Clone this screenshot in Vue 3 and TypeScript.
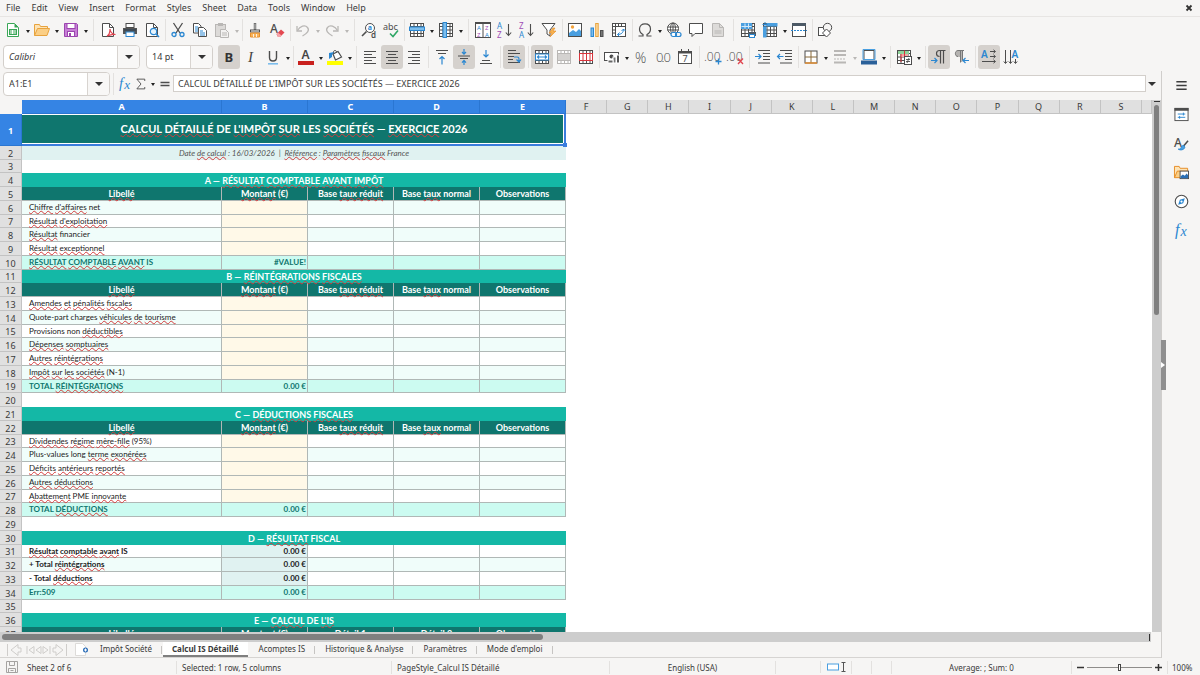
<script setup lang="ts">
import { ref } from 'vue'

type Tool = { icon: string; label: string; drop?: boolean; on?: boolean; off?: boolean; sep?: number }
type Segment = { text: string; flagged: boolean }
type Row = {
  n: number
  kind: 'title' | 'info' | 'blank' | 'section' | 'head' | 'line' | 'total' | 'result'
  text?: string
  amount?: string
  heads?: string[]
}

const menus = ['File', 'Edit', 'View', 'Insert', 'Format', 'Styles', 'Sheet', 'Data', 'Tools', 'Window', 'Help']

const K = '#4d4d4d'
const B = '#2b87d1'
const G = '#b9b7b5'
const line = (d: string, c = K, w = 1) => `<path d="${d}" fill="none" stroke="${c}" stroke-width="${w}"/>`
const box = (x: number, y: number, w: number, h: number, f: string, s = 'none') =>
  `<rect x="${x}" y="${y}" width="${w}" height="${h}" fill="${f}" stroke="${s}"/>`
const glyph = (x: number, y: number, size: number, t: string, c = K, extra = '') =>
  `<text x="${x}" y="${y}" font-size="${size}" fill="${c}" ${extra}>${t}</text>`
const page = (c = K, f = '#fff') => `<path d="M2.5 1.5h7l4 4v9h-11z" fill="${f}" stroke="${c}"/><path d="M9.5 1.5v4h4" fill="none" stroke="${c}"/>`
const grid = (c = K) => box(1.5, 1.5, 13, 13, '#fff', c) + line('M1.5 4.5h13M1.5 8h13M1.5 11.5h13M5 1.5v13M8.5 1.5v13M12 1.5v13', c)
const light = 'font-weight="300" font-family="Open Sans, Noto Sans, sans-serif"'
const serifItalic = 'font-style="italic" font-family="Liberation Serif, serif"'

const icons: Record<string, string> = {
  create: `<path d="M2.5 1.5h7l4 4v9h-11z" fill="#fff" stroke="#3aa757"/><path d="M9.5 1.5v4h4z" fill="#3aa757"/>` + box(4, 7, 8, 6, '#3aa757') + line('M5 9h6M5 11h6M7.5 8v4', '#fff'),
  open: `<path d="M.5 13.5V2.5h5l1 2h7v3" fill="#fde3b5" stroke="#e8a33d"/><path d="M.5 13.5l3-7h12l-2.500 7z" fill="#fbcf86" stroke="#e8a33d"/>`,
  save: `<path d="M1.5 1.5h12l1 1v12h-13z" fill="#c77fd6" stroke="#9b45ae"/>` + box(4, 1.5, 8, 5, '#fff', '#9b45ae') + box(4.5, 9.5, 7, 5, '#fff', '#9b45ae') + box(6, 11, 2, 3, '#9b45ae'),
  pdf: page() + `<path d="M7 14c2-1 3-4 3-7 0 3 2.500 5.500 5.500 5.500-3-.5-6 .5-8.500 1.500z" fill="#fff" stroke="#e0444f" stroke-width="1.200"/>`,
  print: box(4, 1.5, 8, 4, '#fff', K) + `<path d="M1 6h14v6H1z" fill="#555"/>` + box(4, 10, 8, 4.5, '#fff', B) + box(2, 7, 12, 2, '#3f4a54'),
  preview: page() + `<circle cx="9.5" cy="9.5" r="3.200" fill="#e5f3fd" stroke="${B}" stroke-width="1.200"/>` + line('M12 12l3 3', B, 1.6),
  cut: line('M3.5 1l6.500 10M12.5 1L6 11', K, 1.3) + `<circle cx="4" cy="12.5" r="2" fill="none" stroke="${B}" stroke-width="1.300"/><circle cx="12" cy="12.5" r="2" fill="none" stroke="${B}" stroke-width="1.300"/>`,
  copy: `<path d="M1.5 1.5h5l2.500 2.500v7h-7.500z" fill="#fff" stroke="${K}"/>` + line('M3 5h3M3 7h3M3 9h3', B) + `<path d="M6.5 5.5h5l3 3v6h-8z" fill="#fff" stroke="${K}"/>` + line('M8 9h3M8 11h5M8 13h5', B),
  paste: box(1.5, 2.5, 10, 12, '#dcdad8', G) + box(4, 1, 5, 3, G) + `<path d="M6.5 7.5h5l3 3v5h-8z" fill="#f3f2f1" stroke="${G}"/>` + line('M8 11h5M8 13h5', G),
  brush: line('M8 1v7', K, 2.4) + line('M8 1.5v6', '#fff', 0.8) + box(3.5, 8, 9, 2, '#fff', K) + `<path d="M3.5 11h9v4h-9z" fill="#f9b45c" stroke="#e8902d"/>` + line('M6.5 12v3M9.5 12v3', '#fff', 0.8),
  clear: glyph(1, 11, 12, 'A', K, 'font-weight="500"') + `<path d="M7.500 12l4.500-4.500 3.500 3-4.500 4.500H9z" fill="#e34850"/><path d="M7.500 12l1.500-1.500 3.500 3L11 15H9z" fill="#f5a3a7"/>`,
  undo: line('M2 4v5h5', G, 1.3) + line('M2.5 8.5C5 4 10 2.5 12.5 5.5s-.5 6-5 8.500', G, 1.3),
  redo: line('M14 4v5H9', G, 1.3) + line('M13.5 8.5C11 4 6 2.5 3.5 5.5s.5 6 5 8.500', G, 1.3),
  find: `<circle cx="9" cy="6" r="4.500" fill="#fff" stroke="${K}"/>` + line('M5.5 9.5L1 14', K, 1.6) + glyph(6.8, 8.2, 7, 'a', B, 'font-weight="700"') + glyph(10, 15.500, 8, 'd', K, 'font-weight="600"'),
  spell: glyph(0, 7.5, 9, 'abc', K) + line('M7 11.5l3 3 5-6', '#2fa766', 1.6),
  row: grid() + box(0.5, 5, 15, 3.5, '#7cbdec', B),
  col: grid() + box(5, 0.5, 3.5, 15, '#7cbdec', B),
  sort: box(.5, .5, 15, 15, '#fff', K) + box(0, 0, 16, 2, K) + line('M8 2v13', K) + glyph(2, 8.2, 6, 'A', B) + glyph(2, 15, 6, 'Z', '#a04db5') + glyph(10, 8.2, 6, 'Z', '#a04db5') + glyph(10, 15, 6, 'A', B),
  az: glyph(0, 7, 8, 'A', B) + glyph(0, 15.500, 8, 'Z', '#a04db5') + line('M11.5 2v11M8.800 10.5l2.700 3 2.700-3', K, 1.1),
  za: glyph(0, 7, 8, 'Z', '#a04db5') + glyph(0, 15.500, 8, 'A', B) + line('M11.5 2v11M8.800 10.5l2.700 3 2.700-3', K, 1.1),
  filter: `<path d="M1 1.5h13L9 8v6l-3-2V8z" fill="#fff" stroke="${K}"/><path d="M12 6l-4 5h3l-2 4 6-6h-3l2-3z" fill="#f7b14f" stroke="#e58b22" stroke-width=".6"/>`,
  image: box(1.5, 1.5, 13, 13, '#fff', K) + `<path d="M2 14v-3l4-3 3 2 3-3 2 2v5z" fill="#4a9fe0"/><circle cx="5.5" cy="5" r="1.700" fill="#f3a33c"/>`,
  chart: box(2, 6, 2.5, 8.5, '#7cbdec', B) + box(6.7, 1.5, 2.5, 13, '#fcd9a0', '#e8a33d') + box(11.5, 8.5, 2.5, 6, '#777', K),
  pivot: box(1.5, 1.5, 13, 13, '#fff', K) + line('M1.5 4.5h13M4.5 1.5v13M7.5 1.5v3M10.5 1.5v3M1.5 8h3M1.5 11h3') + line('M6.5 12.5c4 0 6-2 6-5.500M6.5 12.5l2-2M6.5 12.5l2 2M12.5 7l-2 2M12.5 7l2 2', B),
  omega: line('M1.5 14h4.500v-1.500C3 11 2.5 8.5 2.5 7 2.5 3.5 5 1.8 8 1.8S13.5 3.5 13.5 7c0 1.500-.5 4-3.500 5.500V14h4.500', K, 1.2),
  link: `<circle cx="7" cy="6.5" r="5.500" fill="#fff" stroke="${K}"/><ellipse cx="7" cy="6.5" rx="2.500" ry="5.500" fill="none" stroke="${K}"/>` + line('M1.5 5h11M1.5 8h11M7 1v11') + `<rect x="5" y="10.5" width="5.500" height="4" rx="2" fill="#fff" stroke="${B}" stroke-width="1.200"/><rect x="9.5" y="10.5" width="5.500" height="4" rx="2" fill="none" stroke="${B}" stroke-width="1.200"/>`,
  comment: `<path d="M1.5 1.5h13v10H7l-3 3v-3H1.5z" fill="#fff" stroke="${K}"/>`,
  header: page(G, '#dddbd9') + line('M4.5 11h7M4.5 9h7', G),
  area: grid() + box(1, 1, 11, 6, '#4a9fe0') + line('M1.5 4.5h10M5 1.5v5M8.5 1.5v5', '#d4e9f9') + box(8, 10, 8, 4, '#4d5a66') + box(9.5, 12.5, 5, 3, '#fff', B),
  freeze: grid() + box(4.5, 1, 11, 3.5, '#4a9fe0') + box(1, 4.5, 3.5, 11, '#4a9fe0') + line('M3 0v5M.5 2.5h5', B),
  split: box(1.5, 1.5, 13, 13, '#fff', K) + box(1, 1, 14, 3, '#4d5a66') + `<path d="M0 8.5h16" stroke="${B}" stroke-dasharray="2 1"/>`,
  shapes: box(1.5, 5.5, 8, 8, '#fff', K) + `<circle cx="10.5" cy="5.5" r="4.200" fill="#f6f5f4" stroke="${K}"/><path d="M9.5 7l4 4-4 4-4-4z" fill="#fff" stroke="${K}"/>`,
  bold: glyph(3.5, 13, 13, 'B', '#333', 'font-weight="700"'),
  italic: glyph(5, 13, 15, 'I', '#444', serifItalic),
  under: line('M4.5 2v6.500c0 2 1 3.500 3.500 3.500s3.500-1.500 3.500-3.500V2', K, 1.4) + box(3, 14, 10, 1.6, '#7cbdec'),
  color: glyph(3.5, 10, 12, 'A', '#444', 'font-weight="600"') + box(0, 12, 16, 4, '#c9211e'),
  fill: line('M6.500 6V3c0-2 3-2 3 0v2', K) + `<path d="M6 5l5-2.500L14.500 8 8.500 11z" fill="#fff" stroke="${K}" stroke-width="1.200"/>` + `<path d="M2 10V4l5-1-2 3v2z" fill="${B}"/>` + box(0, 12, 16, 4, '#ffff00'),
  left: line('M2 2.5h12M2 5.5h8M2 8.5h12M2 11.5h8M2 14.5h12'),
  center: line('M2 2.5h12M4 5.5h8M2 8.5h12M4 11.5h8M2 14.5h12'),
  right: line('M2 2.5h12M6 5.5h8M2 8.5h12M6 11.5h8M2 14.5h12'),
  top: line('M2 1.5h12M4 4.5h8') + line('M8 15.5V8M5.5 10L8 7.5l2.500 2.500', B, 1.2),
  middle: line('M2 7h12M4 9.5h8') + line('M8 0v5M6 3l2 2.200L10 3M8 16v-4.500M6 13.7l2-2.200 2 2.200', B, 1.2),
  bottom: line('M4 11.5h8M2 14.5h12') + line('M8 1v7M5.5 5.5L8 8l2.500-2.500', B, 1.2),
  wrap: line('M2 1.5h8M2 4.5h12M2 7.5h6M2 10.5h5M2 13.5h12') + line('M8 8h3c2 0 2 1 2 4M10.5 10.5l2.500 2.500 2-2.500', B, 1.2),
  merge: grid() + box(1.5, 5, 13, 6, '#fff', B) + line('M3 8h10M5 6.5L3.5 8 5 9.5M11 6.5L12.5 8 11 9.5', B, 1.2),
  mergeC: grid(G) + box(2, 5, 12, 6, '#d4d2d0'),
  unmerge: grid() + box(1.5, 4.5, 13, 7, '#fff', '#d8343c') + line('M5 4.5v7M8.5 4.5v7M12 4.5v7', '#d8343c'),
  money: box(.5, 3.5, 14, 8, '#fff', K) + `<circle cx="7.5" cy="7.5" r="2" fill="${K}"/>` + box(9, 8, 3, 6, '#777', '#fff') + box(12.5, 6, 3, 8, '#555', '#fff') + box(4, 11, 5, 3, '#666', '#fff'),
  percent: glyph(2, 13.5, 14, '%', K, light),
  decimal: glyph(1, 13, 13, '00', K, light) + box(7.5, 12, 1, 1, K),
  date: box(1.5, 2.5, 13, 12, '#fff', K) + box(1, 2, 14, 2.5, K) + line('M4.5 0v3M11.5 0v3', K) + glyph(5.500, 13, 9, '7', K),
  decAdd: glyph(-1, 12, 12, '.00', K, light) + line('M13.5 9.5v6M10.5 12.5h6', B, 1.3),
  decDel: glyph(-1, 12, 12, '.00', K, light) + line('M11 9.5l5 5.500M16 9.5l-5 5.500', '#e0444f', 1.3),
  indent: line('M3 1.5h12M8 4.5h7M8 7.5h7M8 10.5h7M3 14h12') + line('M0 7.5h6M3.5 5L6 7.5 3.5 10', B, 1.2),
  outdent: line('M3 1.5h12M8 4.5h7M8 7.5h7M8 10.5h7M3 14h12') + line('M.5 7.5h6M3 5L.5 7.5 3 10', B, 1.2),
  borders: box(2, 2, 12, 12, '#fff', K) + line('M8 2v12M2 8h12', '#8a6a3a') + line('M2 14h12', '#e8902d', 1.4),
  lines: line('M2 2h12', G, 2) + line('M2 6h12', G, 2) + `<path d="M2 10h12" stroke="${G}" stroke-dasharray="2 1"/><path d="M2 13.5h12" stroke="${G}" stroke-width="2"/>`,
  bcolor: box(3, 1.5, 10, 9, '#fff', K) + `<path d="M2 .5h12v10H2z" fill="none" stroke="#4a9fe0"/>` + box(0, 11.5, 16, 4, '#2a6099'),
  cond: grid() + box(2, 2, 11, 3, '#8ed49a') + box(5, 5, 7, 3, '#f4a7a7') + line('M5 5v8M8.5 1.5v8', '#d8343c') + box(8.5, 7.5, 7, 8, '#fff', K) + line('M10 10.5h4M10 12.5h4M13 9l-2 5', K, 0.9),
  ltr: line('M14.5 1.5H8.5c-4 0-4 6 0 6M9.5 1.5v13M12.5 1.5v13', K, 1.2) + line('M0 11.5h6M3.5 9L6 11.5 3.5 14', B, 1.2),
  rtl: `<path d="M6.5 1.5c-6 0-6 6.500 0 6.500h1v5h2v-11.500z" fill="#b5b3b1"/>` + line('M11 1.5H5c-3.500 0-3.500 6 0 6M7.500 1.5v12M9.500 1.5v10', '#777') + line('M16 11.5h-6M12.5 9L10 11.5l2.500 2.500', B, 1.2),
  ttb: glyph(0, 9, 10, 'A', B, 'font-weight="600"') + line('M9 2.5h5M12.5.8l2 1.700-2 1.700M9 7.5h5M12.5 5.8l2 1.700-2 1.700M1 12.5h13M12.5 10.8l2 1.700-2 1.700'),
  btt: glyph(8.5, 9, 10, 'A', B, 'font-weight="600"') + line('M2.5 1v13M.8 12.5l1.700 2 1.700-2M7.5 1v13M5.8 12.5l1.700 2 1.700-2M12.5 10v4M10.8 12.5l1.700 2 1.700-2'),
  menu: line('M2.5 4h11M2.5 8h11M2.5 12h11', '#3d3d3d', 1.5),
  props: box(1, 1.5, 14, 13, '#fff', K) + box(.5, 1, 15, 3, K) + line('M4 7.5h8M10 6v3M4 11h8M6 9.5v3', B),
  styles: glyph(0, 12, 13, 'A', K, 'font-weight="500"') + line('M15 5l-5 6', K, 1.6) + `<path d="M10.5 10c-2 0-3 1.500-3 3-1 1-2 1-3 1 2 1.500 6.500 1 7-2z" fill="#4a9fe0" stroke="${B}"/>`,
  gallery: `<path d="M.5 13.5v-12h5l1 2h8v3" fill="#fde3b5" stroke="#e58b22"/><path d="M.5 13.5l3-7h11v7z" fill="#fbcf86" stroke="#e58b22"/>` + box(6.5, 6.5, 9, 8, '#fff', K) + `<path d="M7 14v-2l2.500-2 2 1.500L13.5 9l1.500 2v3z" fill="#2b6fb5"/>`,
  navigator: `<circle cx="8" cy="8" r="6.700" fill="#fff" stroke="${K}" stroke-width="1.200"/><path d="M11.5 4.5L9.8 9.8 4.5 11.5l1.700-5.300z" fill="${B}"/><circle cx="8" cy="8" r="1.200" fill="#fff"/>`,
  fx: glyph(1, 12.5, 17, 'f', B, serifItalic) + glyph(7, 14, 15, 'x', B, serifItalic),
  sigma: line('M13 4V1.5H2.5L8 8l-5.500 6.500H13V12', K, 1.2),
  equal: line('M2 6h12M2 10h12', K, 1.8),
}

const standardBar: Tool[] = [
  { icon: 'create', label: 'New', drop: true }, { icon: 'open', label: 'Open', drop: true }, { icon: 'save', label: 'Save', drop: true, sep: 8 },
  { icon: 'pdf', label: 'Export as PDF' }, { icon: 'print', label: 'Print' }, { icon: 'preview', label: 'Print preview', sep: 4 },
  { icon: 'cut', label: 'Cut' }, { icon: 'copy', label: 'Copy' }, { icon: 'paste', label: 'Paste', drop: true, off: true, sep: 4 },
  { icon: 'brush', label: 'Clone formatting' }, { icon: 'clear', label: 'Clear formatting', sep: 4 },
  { icon: 'undo', label: 'Undo', drop: true, off: true }, { icon: 'redo', label: 'Redo', drop: true, off: true, sep: 8 },
  { icon: 'find', label: 'Find and replace' }, { icon: 'spell', label: 'Spelling', sep: 4 },
  { icon: 'row', label: 'Row', drop: true }, { icon: 'col', label: 'Column', drop: true, sep: 8 },
  { icon: 'sort', label: 'Sort' }, { icon: 'az', label: 'Sort ascending' }, { icon: 'za', label: 'Sort descending' }, { icon: 'filter', label: 'AutoFilter', sep: 4 },
  { icon: 'image', label: 'Insert image' }, { icon: 'chart', label: 'Insert chart' }, { icon: 'pivot', label: 'Pivot table', sep: 4 },
  { icon: 'omega', label: 'Special character', drop: true }, { icon: 'link', label: 'Hyperlink' }, { icon: 'comment', label: 'Comment' },
  { icon: 'header', label: 'Headers and footers', off: true, sep: 8 },
  { icon: 'area', label: 'Print area' }, { icon: 'freeze', label: 'Freeze rows and columns', drop: true }, { icon: 'split', label: 'Split window', sep: 4 },
  { icon: 'shapes', label: 'Draw functions' },
]

const formatBar: Tool[] = [
  { icon: 'bold', label: 'Bold', on: true }, { icon: 'italic', label: 'Italic' }, { icon: 'under', label: 'Underline', drop: true, sep: 4 },
  { icon: 'color', label: 'Font color', drop: true }, { icon: 'fill', label: 'Background color', drop: true, sep: 6 },
  { icon: 'left', label: 'Align left' }, { icon: 'center', label: 'Center', on: true }, { icon: 'right', label: 'Align right', sep: 6 },
  { icon: 'top', label: 'Align top' }, { icon: 'middle', label: 'Center vertically', on: true }, { icon: 'bottom', label: 'Align bottom', sep: 6 },
  { icon: 'wrap', label: 'Wrap text', on: true, sep: 6 },
  { icon: 'merge', label: 'Merge and center', on: true }, { icon: 'mergeC', label: 'Merge cells', off: true }, { icon: 'unmerge', label: 'Unmerge cells', sep: 4 },
  { icon: 'money', label: 'Currency', drop: true }, { icon: 'percent', label: 'Percent' }, { icon: 'decimal', label: 'Number' }, { icon: 'date', label: 'Date', sep: 6 },
  { icon: 'decAdd', label: 'Add decimal place' }, { icon: 'decDel', label: 'Delete decimal place', sep: 6 },
  { icon: 'indent', label: 'Increase indent' }, { icon: 'outdent', label: 'Decrease indent', sep: 4 },
  { icon: 'borders', label: 'Borders', drop: true }, { icon: 'lines', label: 'Border style', drop: true, off: true }, { icon: 'bcolor', label: 'Border color', drop: true, sep: 6 },
  { icon: 'cond', label: 'Conditional formatting', drop: true, sep: 6 },
  { icon: 'ltr', label: 'Left to right', on: true }, { icon: 'rtl', label: 'Right to left', sep: 6 },
  { icon: 'ttb', label: 'Text direction left to right', on: true }, { icon: 'btt', label: 'Text direction top to bottom' },
]

const sideBar = [
  { icon: 'menu', label: 'Sidebar settings' }, { icon: 'props', label: 'Properties' }, { icon: 'styles', label: 'Styles' },
  { icon: 'gallery', label: 'Gallery' }, { icon: 'navigator', label: 'Navigator' }, { icon: 'fx', label: 'Functions' },
]

const dataCols = ['A', 'B', 'C', 'D', 'E']
const restCols = 'FGHIJKLMNOPQRS'.split('')

// Words between tildes carry a spelling mark.
const standardHeads = ['~Libellé~', '~Montant~ (€)', 'Base ~taux réduit~', 'Base ~taux~ normal', 'Observations']

const rows: Row[] = [
  { n: 1, kind: 'title', text: "~CALCUL~ ~DÉTAILLÉ~ DE ~L'IMPÔT~ ~SUR~ LES ~SOCIÉTÉS~ — ~EXERCICE~ 2026" },
  { n: 2, kind: 'info', text: 'Date ~de calcul~ : 16/03/2026 \u00a0|\u00a0 ~Référence~ : ~Paramètres~ ~fiscaux~ France' },
  { n: 3, kind: 'blank' },
  { n: 4, kind: 'section', text: 'A — ~RÉSULTAT~ ~COMPTABLE~ ~AVANT~ ~IMPÔT~' },
  { n: 5, kind: 'head', heads: standardHeads },
  { n: 6, kind: 'line', text: "~Chiffre~ ~d'affaires~ net" },
  { n: 7, kind: 'line', text: "~Résultat~ ~d'exploitation~" },
  { n: 8, kind: 'line', text: '~Résultat~ financier' },
  { n: 9, kind: 'line', text: '~Résultat~ ~exceptionnel~' },
  { n: 10, kind: 'total', text: '~RÉSULTAT~ ~COMPTABLE~ ~AVANT~ IS', amount: '#VALUE!' },
  { n: 11, kind: 'section', text: 'B — ~RÉINTÉGRATIONS~ ~FISCALES~' },
  { n: 12, kind: 'head', heads: standardHeads },
  { n: 13, kind: 'line', text: '~Amendes~ ~et~ ~pénalités~ ~fiscales~' },
  { n: 14, kind: 'line', text: 'Quote-part charges ~véhicules~ ~de~ ~tourisme~' },
  { n: 15, kind: 'line', text: 'Provisions non ~déductibles~' },
  { n: 16, kind: 'line', text: '~Dépenses~ ~somptuaires~' },
  { n: 17, kind: 'line', text: '~Autres~ ~réintégrations~' },
  { n: 18, kind: 'line', text: '~Impôt~ ~sur~ ~les~ ~sociétés~ (N-1)' },
  { n: 19, kind: 'total', text: 'TOTAL ~RÉINTÉGRATIONS~', amount: '0.00 €' },
  { n: 20, kind: 'blank' },
  { n: 21, kind: 'section', text: 'C — ~DÉDUCTIONS~ ~FISCALES~' },
  { n: 22, kind: 'head', heads: standardHeads },
  { n: 23, kind: 'line', text: '~Dividendes~ ~régime~ ~mère-fille~ (95%)' },
  { n: 24, kind: 'line', text: 'Plus-values long ~terme~ ~exonérées~' },
  { n: 25, kind: 'line', text: '~Déficits~ ~antérieurs~ ~reportés~' },
  { n: 26, kind: 'line', text: '~Autres~ ~déductions~' },
  { n: 27, kind: 'line', text: '~Abattement~ PME ~innovante~' },
  { n: 28, kind: 'total', text: 'TOTAL ~DÉDUCTIONS~', amount: '0.00 €' },
  { n: 29, kind: 'blank' },
  { n: 30, kind: 'section', text: 'D — ~RÉSULTAT~ FISCAL' },
  { n: 31, kind: 'result', text: '~Résultat~ ~comptable~ ~avant~ IS', amount: '0.00 €' },
  { n: 32, kind: 'result', text: '+ Total ~réintégrations~', amount: '0.00 €' },
  { n: 33, kind: 'result', text: '- Total ~déductions~', amount: '0.00 €' },
  { n: 34, kind: 'total', text: 'Err:509', amount: '0.00 €' },
  { n: 35, kind: 'blank' },
  { n: 36, kind: 'section', text: "E — ~CALCUL~ DE ~L'IS~" },
  { n: 37, kind: 'head', heads: ['~Libellé~', '~Montant~ (€)', 'Détail 1', 'Détail 2', 'Observations'] },
]

const merged = (r: Row) => r.kind === 'title' || r.kind === 'info' || r.kind === 'section' || r.kind === 'blank'
const segments = (s = ''): Segment[] =>
  s.split('~').map((text, i) => ({ text, flagged: i % 2 === 1 })).filter((p) => p.text !== '')

const tabs = ['Impôt Société', 'Calcul IS Détaillé', 'Acomptes IS', 'Historique & Analyse', 'Paramètres', "Mode d'emploi"]
const activeTab = ref('Calcul IS Détaillé')
const fontName = ref('Calibri')
const fontSize = ref('14 pt')
const cellRef = ref('A1:E1')
const formula = ref("CALCUL DÉTAILLÉ DE L'IMPÔT SUR LES SOCIÉTÉS — EXERCICE 2026")
const zoom = ref(50)
</script>

<template>
  <div class="app">
    <nav class="menubar">
      <button v-for="m in menus" :key="m" type="button">{{ m }}</button>
      <button type="button" class="close" aria-label="Close document">
        <svg width="8" height="8" viewBox="0 0 8 8"><path d="M1.5 1.5l5 5M6.5 1.5l-5 5" stroke="#333" stroke-width="1.8" /></svg>
      </button>
    </nav>

    <div class="toolbar standard">
      <template v-for="t in standardBar" :key="t.icon">
        <button type="button" class="tool" :class="{ on: t.on }" :aria-label="t.label">
          <svg width="16" height="16" viewBox="0 0 16 16" v-html="icons[t.icon]"></svg>
        </button>
        <button v-if="t.drop" type="button" class="drop" :class="{ off: t.off }" :aria-label="t.label + ' options'"></button>
        <span v-if="t.sep" class="sep" :class="'sep' + t.sep"></span>
      </template>
    </div>

    <div class="toolbar format">
      <div class="combo font">
        <input v-model="fontName" aria-label="Font name" />
        <button type="button" aria-label="Font list"></button>
      </div>
      <div class="combo size">
        <input v-model="fontSize" aria-label="Font size" />
        <button type="button" aria-label="Size list"></button>
      </div>
      <template v-for="t in formatBar" :key="t.icon">
        <button type="button" class="tool" :class="{ on: t.on }" :aria-label="t.label">
          <svg width="16" height="16" viewBox="0 0 16 16" v-html="icons[t.icon]"></svg>
        </button>
        <button v-if="t.drop" type="button" class="drop" :class="{ off: t.off }" :aria-label="t.label + ' options'"></button>
        <span v-if="t.sep" class="sep" :class="'sep' + t.sep"></span>
      </template>
    </div>

    <div class="body">
      <main class="work">
        <div class="formulabar">
          <div class="combo name">
            <input v-model="cellRef" aria-label="Name box" />
            <button type="button" aria-label="Name list"></button>
          </div>
          <span class="sep sep6"></span>
          <button type="button" class="fxtool" aria-label="Function wizard"><svg width="14" height="14" viewBox="0 0 16 16" v-html="icons.fx"></svg></button>
          <button type="button" class="fxtool" aria-label="Select function"><svg width="12" height="12" viewBox="0 0 16 16" v-html="icons.sigma"></svg></button>
          <button type="button" class="drop" aria-label="Function list"></button>
          <button type="button" class="fxtool" aria-label="Formula"><svg width="12" height="12" viewBox="0 0 16 16" v-html="icons.equal"></svg></button>
          <input v-model="formula" class="formula" aria-label="Input line" />
          <button type="button" class="expand" aria-label="Expand formula bar"></button>
        </div>

        <div class="sheetwrap">
          <div class="sheet">
            <table>
              <colgroup>
                <col class="c-num" />
                <col class="c-a" />
                <col v-for="i in 4" :key="i" class="c-b" />
                <col v-for="c in restCols" :key="c" />
                <col class="c-last" />
              </colgroup>
              <thead>
                <tr>
                  <th class="corner"></th>
                  <th v-for="c in dataCols" :key="c" class="picked" scope="col">{{ c }}</th>
                  <th v-for="c in restCols" :key="c" scope="col">{{ c }}</th>
                  <th></th>
                </tr>
              </thead>
              <tbody>
                <tr v-for="r in rows" :key="r.n" :class="[r.kind, { short: r.n % 4 === 3, even: r.n % 2 === 0 }]">
                  <th scope="row" :class="{ picked: r.n === 1 }">{{ r.n }}</th>
                  <td v-if="merged(r)" colspan="5" class="wide">
                    <div class="clip"><span v-for="(s, i) in segments(r.text)" :key="i" :class="{ sp: s.flagged }">{{ s.text }}</span></div>
                    <div v-if="r.kind === 'title'" class="selection"></div>
                  </td>
                  <template v-else-if="r.heads">
                    <td v-for="(h, j) in r.heads" :key="j" class="cell">
                      <div class="clip"><span v-for="(s, i) in segments(h)" :key="i" :class="{ sp: s.flagged }">{{ s.text }}</span></div>
                    </td>
                  </template>
                  <template v-else>
                    <td class="cell label">
                      <div class="clip"><span v-for="(s, i) in segments(r.text)" :key="i" :class="{ sp: s.flagged }">{{ s.text }}</span></div>
                    </td>
                    <td class="cell amount"><div class="clip">{{ r.amount }}</div></td>
                    <td class="cell"></td>
                    <td class="cell"></td>
                    <td class="cell"></td>
                  </template>
                  <td colspan="15"></td>
                </tr>
              </tbody>
            </table>
          </div>
          <div class="vscroll"><span class="split"></span><span class="thumb"></span></div>
        </div>
        <div class="hscroll"><span class="thumb"></span><span class="split"></span></div>

        <div class="tabs">
          <button type="button" class="nav" aria-label="Sheet navigation">
            <svg width="62" height="14" viewBox="0 0 62 14" fill="none" stroke="#cfcdcb">
              <path d="M1.5 1v12M12 1.5L5 7l7 5.500V9h3V5h-3zM21 3v8M28 3.5L23 7l5 3.500zM35 3.5L30 7l5 3.500zM37 3.5L42 7l-5 3.500zM44 3v8M50 1.5L57 7l-7 5.500V9h-3V5h3zM60.5 1v12" />
            </svg>
          </button>
          <button type="button" class="add" aria-label="Add sheet">
            <svg width="14" height="13" viewBox="0 0 14 13"><path d="M.5 .5h7l3 3v9H.5z" fill="#fff" stroke="#dddbd9" /><circle cx="10.5" cy="7" r="2.5" fill="#2a6db8" /><path d="M9 7h3M10.5 5.5v3" stroke="#fff" /></svg>
          </button>
          <button v-for="t in tabs" :key="t" type="button" class="tab" :class="{ active: t === activeTab }" @click="activeTab = t">{{ t }}</button>
        </div>
      </main>

      <aside class="sidebar">
        <button v-for="s in sideBar" :key="s.icon" type="button" :aria-label="s.label">
          <svg width="15" height="15" viewBox="0 0 16 16" v-html="icons[s.icon]"></svg>
        </button>
        <button type="button" class="handle" aria-label="Hide sidebar">
          <svg width="4" height="6" viewBox="0 0 4 6"><path d="M0 0l4 3-4 3z" fill="#fff" /></svg>
        </button>
      </aside>
    </div>

    <footer class="status">
      <svg class="disk" width="12" height="12" viewBox="0 0 12 12" fill="none" stroke="#a5a3a1"><path d="M.5 .5h11v11H.5zM3.5 .5v4h5v-4M2.5 11.5v-4h7v4M4.5 9.5h3" /></svg>
      <span class="s-sheet">Sheet 2 of 6</span>
      <span class="s-sel">Selected: 1 row, 5 columns</span>
      <span class="s-style">PageStyle_Calcul IS Détaillé</span>
      <span class="s-lang">English (USA)</span>
      <span class="s-insert"></span>
      <span class="s-mode">
        <svg width="20" height="12" viewBox="0 0 20 12" fill="none"><rect x=".5" y="3" width="11" height="6" fill="#fff" stroke="#4a9fe0" /><path d="M14.5 1.5h4M16.5 1.5v9M14.5 10.5h4" stroke="#555" /></svg>
      </span>
      <span class="s-small"></span>
      <span class="s-small"></span>
      <span class="s-sum">Average: ; Sum: 0</span>
      <span class="s-zoom">
        <button type="button" aria-label="Zoom out"><svg width="7" height="7" viewBox="0 0 7 7"><path d="M0 3.5h7" stroke="#333" stroke-width="1.5" /></svg></button>
        <input v-model.number="zoom" type="range" min="0" max="100" aria-label="Zoom" />
        <button type="button" aria-label="Zoom in"><svg width="7" height="7" viewBox="0 0 7 7"><path d="M0 3.5h7M3.5 0v7" stroke="#333" stroke-width="1.5" /></svg></button>
      </span>
      <span class="s-pct">100%</span>
    </footer>
  </div>
</template>

<style>
body {
  margin: 0;
  overflow: hidden;
}
</style>

<style scoped>
.app {
  display: flex;
  flex-direction: column;
  height: 100vh;
  overflow: hidden;
  background: #f6f5f4;
  color: #3a3a3a;
  font: 9px/12px 'Noto Sans', sans-serif;
}
button,
input {
  margin: 0;
  padding: 0;
  border: 0;
  background: none;
  font: inherit;
  color: inherit;
}
svg {
  display: block;
  overflow: visible;
}
.menubar {
  display: flex;
  align-items: center;
  box-sizing: border-box;
  height: 17px;
  padding: 0 7px 0 6px;
  gap: 11px;
  border-bottom: 1px solid #e7e5e3;
  flex: none;
}
.close {
  margin-left: auto;
}
.toolbar {
  display: flex;
  align-items: center;
  flex: none;
}
.standard {
  height: 26px;
  padding-left: 2px;
}
.format {
  height: 28px;
  padding-left: 3px;
}
.tool {
  display: flex;
  align-items: center;
  justify-content: center;
  width: 22px;
  height: 24px;
  border-radius: 3px;
  flex: none;
}
.tool.on {
  background: #d5d1cd;
}
.drop {
  position: relative;
  width: 7px;
  height: 24px;
  flex: none;
}
.drop::after,
.combo button::after,
.expand::after {
  content: '';
  display: block;
  width: 0;
  margin: 2px auto 0;
  border: solid transparent;
  border-width: 3px 2px 0;
  border-top-color: #222;
}
.drop.off::after {
  border-top-color: #b9b7b5;
}
.combo button::after,
.expand::after {
  border-width: 4px 4px 0;
  border-top-color: #333;
  margin-top: 0;
}
.sep {
  height: 22px;
  flex: none;
  background: linear-gradient(#e3e1df, #e3e1df) center / 1px 100% no-repeat;
}
.sep4 {
  width: 4px;
}
.sep6 {
  width: 6px;
}
.sep8 {
  width: 8px;
}
.combo {
  display: flex;
  box-sizing: border-box;
  height: 24px;
  border: 1px solid #d3cfcb;
  border-radius: 4px;
  background: #fff;
  overflow: hidden;
  flex: none;
}
.combo input {
  flex: 1;
  min-width: 0;
  padding-left: 5px;
}
.combo button {
  width: 22px;
  border-left: 1px solid #d8d4d0;
  background: #f8f7f6;
}
.font {
  width: 137px;
  margin-right: 6px;
}
.font input {
  font-style: italic;
}
.size {
  width: 67px;
  margin-right: 5px;
}
.name {
  width: 107px;
}
.body {
  display: flex;
  flex: 1;
  min-height: 0;
}
.work {
  display: flex;
  flex-direction: column;
  flex: 1;
  min-width: 0;
}
.formulabar {
  display: flex;
  align-items: center;
  height: 29px;
  padding: 0 4px 0 3px;
  box-sizing: border-box;
  border-bottom: 4px solid #f6f5f4;
  flex: none;
}
.fxtool {
  display: flex;
  align-items: center;
  justify-content: center;
  width: 16px;
  height: 24px;
  flex: none;
}
.formulabar .sep {
  margin-right: 1px;
}
.formulabar .drop {
  margin-right: 1px;
}
.formula {
  flex: 1;
  min-width: 0;
  height: 17px;
  box-sizing: border-box;
  padding-left: 4px;
  border: 1px solid #d3cfcb;
  background: #fff;
}
.expand {
  width: 11px;
  height: 20px;
}
.sheetwrap {
  display: flex;
  flex: 1;
  min-height: 0;
}
.sheet {
  flex: 1;
  min-width: 0;
  overflow: hidden;
  background: #fff;
}
table {
  width: 100%;
  table-layout: fixed;
  border-collapse: separate;
  border-spacing: 0;
}
.c-num {
  width: 22px;
}
.c-a {
  width: 200px;
}
.c-b {
  width: 86px;
}
.c-last {
  width: 10px;
}
th,
td {
  padding: 0;
  box-sizing: border-box;
}
th {
  height: 14px;
  border-right: 1px solid #c3c3c3;
  border-bottom: 1px solid #c3c3c3;
  background: #e0e0e0;
  font-weight: 400;
  line-height: 11px;
  overflow: hidden;
}
.corner {
  background: #f6f5f4;
  border-color: #f6f5f4;
}
th.picked {
  background: #3584e4;
  border-color: #2a76d2;
  color: #fff;
  font-weight: 700;
}
tbody th {
  padding-top: 1px;
}
tbody tr,
tbody th {
  height: 14px;
}
tbody .short,
tbody .short th {
  height: 13px;
}
tbody .title,
tbody .title th {
  height: 32px;
}
td {
  font-family: Lato, 'Open Sans', sans-serif;
  font-size: 8px;
  line-height: 10px;
  color: #1c1c1c;
}
.clip {
  height: 11px;
  line-height: 11px;
  white-space: nowrap;
}
.sp {
  text-decoration: underline wavy #d43c3c 1px;
  text-underline-offset: 0;
  text-decoration-skip-ink: none;
}
.wide {
  text-align: center;
}
.title .wide {
  position: relative;
  background: #0f766e;
  color: #fff;
  font-size: 11px;
  font-weight: 700;
}
.title .clip {
  height: 16px;
  line-height: 14px;
}
.selection {
  position: absolute;
  inset: 0;
  border: solid #3b7ddd;
  border-width: 0 2px 2px 0;
  box-shadow: inset -1px -1px #fff, inset 0 1px #fff;
}
.selection::after {
  content: '';
  position: absolute;
  right: -3px;
  bottom: -3px;
  width: 4px;
  height: 4px;
  background: #3b7ddd;
}
.info .wide {
  background: #e0f2f1;
  color: #555;
  font-style: italic;
}
.section .wide {
  background: #14b8a6;
  color: #fff;
  font-size: 9px;
  font-weight: 700;
}
.cell {
  border-right: 1px solid #b0b8b6;
  border-bottom: 1px solid #b0b8b6;
}
.head .cell {
  background: #0f766e;
  color: #fff;
  font-size: 9px;
  font-weight: 700;
  text-align: center;
}
.even .cell {
  background: #f0fdfa;
}
.label {
  padding-left: 7px;
}
.amount {
  padding-right: 1px;
  text-align: right;
}
.line .amount {
  background: #fff9e8;
}
.result .label,
.result .amount {
  font-weight: 700;
}
.result .amount {
  background: #e0f2f1;
}
.total .cell {
  background: #ccfbf1;
  color: #0f766e;
  font-weight: 700;
}
.even.head .cell {
  background: #0f766e;
}
.even.line .amount {
  background: #fff9e8;
}
.even.result .amount {
  background: #e0f2f1;
}
.vscroll {
  display: flex;
  flex-direction: column;
  align-items: center;
  width: 9px;
  background: #cdcdcd;
  flex: none;
}
.vscroll .split {
  width: 6px;
  height: 1px;
  margin: 1px 0 3px;
  background: #333;
}
.vscroll .thumb {
  width: 5px;
  height: 39.5%;
  border-radius: 3px;
  background: #7f7f7f;
}
.hscroll {
  display: flex;
  align-items: center;
  justify-content: space-between;
  height: 10px;
  margin-right: 10px;
  padding-right: 1px;
  background: #cdcdcd;
  flex: none;
}
.hscroll .thumb {
  width: 47%;
  height: 6px;
  margin-left: 2px;
  border-radius: 3px;
  background: #7f7f7f;
}
.hscroll .split {
  width: 1px;
  height: 7px;
  background: #333;
}
.tabs {
  display: flex;
  align-items: stretch;
  box-sizing: border-box;
  height: 16px;
  padding-left: 6px;
  border-bottom: 1px solid #d6d4d2;
  flex: none;
}
.nav,
.add {
  display: flex;
  align-items: center;
}
.add {
  margin: 0 2px 0 7px;
}
.tab {
  position: relative;
  padding: 0 9px 1px;
  margin-right: 2px;
  font-size: 8px;
}
.tab::after {
  content: '';
  position: absolute;
  right: -1px;
  top: 4px;
  width: 1px;
  height: 8px;
  background: #c6c4c2;
}
.tab.active {
  background: #fff;
  box-shadow: inset 0 -2px #7f7f7f;
  font-weight: 700;
}
.tab.active::after {
  content: none;
}
.sidebar {
  position: relative;
  display: flex;
  flex-direction: column;
  align-items: center;
  gap: 14px;
  width: 38px;
  padding-top: 7px;
  border-left: 1px solid #d0cecc;
  flex: none;
}
.sidebar .handle {
  position: absolute;
  left: -1px;
  top: 50%;
  display: flex;
  align-items: center;
  width: 5px;
  height: 50px;
  margin: -25px 0 0;
  background: #8f8f8f;
}
.status {
  display: flex;
  align-items: center;
  box-sizing: border-box;
  height: 17px;
  padding-top: 1px;
  font-size: 8px;
  flex: none;
}
.status span {
  box-sizing: border-box;
  line-height: 13px;
}
.disk {
  margin: 0 5px 0 6px;
}
.s-sheet {
  width: 153px;
  padding-left: 4px;
}
.s-sel {
  width: 215px;
  padding-left: 5px;
  border-left: 1px solid #e3e1df;
}
.s-style {
  width: 218px;
  padding-left: 5px;
  border-left: 1px solid #e3e1df;
}
.s-lang {
  flex: 1;
  text-align: center;
  border-left: 1px solid #e3e1df;
}
.s-insert {
  width: 45px;
  height: 13px;
  border-left: 1px solid #e3e1df;
}
.s-mode {
  width: 31px;
  padding-left: 6px;
  border-left: 1px solid #e3e1df;
}
.s-small {
  width: 20px;
  height: 13px;
  border-left: 1px solid #e3e1df;
}
.s-sum {
  width: 180px;
  text-align: center;
  border-left: 1px solid #e3e1df;
}
.s-zoom {
  display: flex;
  align-items: center;
  width: 96px;
  gap: 3px;
  padding-left: 5px;
  border-left: 1px solid #e3e1df;
}
.s-zoom input {
  flex: 1;
  min-width: 0;
  height: 13px;
  appearance: none;
  background: linear-gradient(#8f8d8b, #8f8d8b) center / 100% 1px no-repeat;
}
.s-zoom button:last-child {
  margin-right: 5px;
}
.s-zoom input::-webkit-slider-thumb {
  appearance: none;
  box-sizing: border-box;
  width: 3px;
  height: 7px;
  border: 1px solid #444;
  background: #fff;
}
.s-pct {
  width: 33px;
  padding-left: 4px;
  border-left: 1px solid #e3e1df;
}
</style>
